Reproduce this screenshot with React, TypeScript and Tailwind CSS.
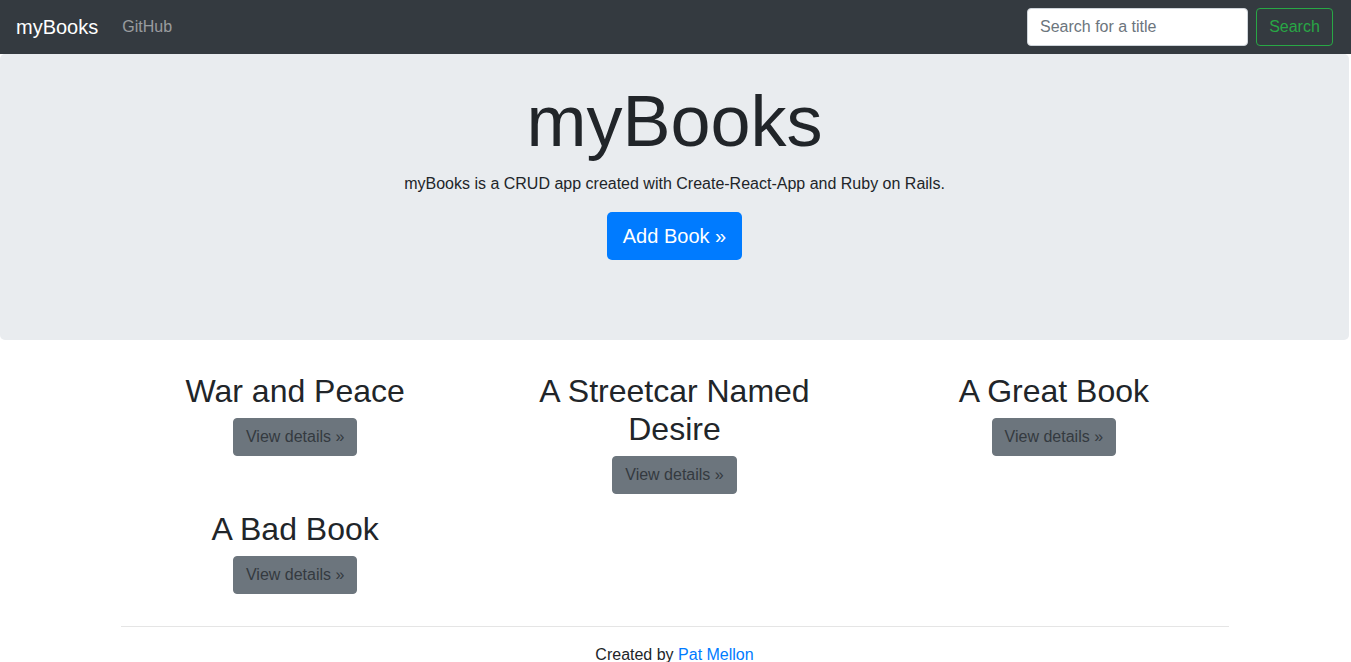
const books = [
  { id: 1, title: 'War and Peace' },
  { id: 2, title: 'A Streetcar Named Desire' },
  { id: 3, title: 'A Great Book' },
  { id: 4, title: 'A Bad Book' },
];

function Navbar() {
  return (
    <nav className="flex h-[54px] w-full flex-row items-center justify-between bg-[#343a40] pl-4 pr-[18px]">
      <div className="flex flex-row items-center">
        <a href="#" className="mr-4 text-[20px] leading-[30px] text-white">
          myBooks
        </a>
        <a href="#" className="px-2 text-[16px] leading-6 text-white/50">
          GitHub
        </a>
      </div>
      <form className="flex flex-row items-center" onSubmit={(e) => e.preventDefault()}>
        <input
          type="search"
          placeholder="Search for a title"
          className="h-[38px] w-[221px] rounded-[4px] border border-[#ced4da] bg-white px-3 text-[16px] text-[#495057] placeholder:text-[#6c757d] outline-none"
        />
        <button
          type="submit"
          className="ml-2 h-[38px] w-[77px] rounded-[4px] border border-[#28a745] text-[16px] text-[#28a745]"
        >
          Search
        </button>
      </form>
    </nav>
  );
}

function Jumbotron() {
  return (
    <div className="mr-[2px] rounded-[5px] bg-[#e9ecef] px-8 pt-[24px] pb-[64px] text-center">
      <h1 className="mb-2 text-[72px] leading-[86px] font-light">myBooks</h1>
      <p className="mb-4 text-[16px] leading-6">
        myBooks is a CRUD app created with Create-React-App and Ruby on Rails.
      </p>
      <p className="mb-4">
        <button
          type="button"
          className="h-[48px] rounded-[5px] bg-[#007bff] px-4 text-[20px] leading-[30px] text-white"
        >
          Add Book »
        </button>
      </p>
    </div>
  );
}

function BookCard({ title }: { title: string }) {
  return (
    <div className="px-[15px] text-center">
      <h2 className="mb-2 text-[32px] leading-[38px]">{title}</h2>
      <p className="mb-4">
        <a
          href="#"
          className="inline-block h-[38px] rounded-[4px] border border-[#6c757d] bg-[#6c757d] px-3 text-[16px] leading-[36px] text-[#343a40]"
        >
          View details »
        </a>
      </p>
    </div>
  );
}

export default function App() {
  return (
    <div className="min-h-screen bg-white text-[#212529] [font-family:'Liberation_Sans',Arial,sans-serif]">
      <Navbar />
      <Jumbotron />
      <div className="mx-auto mt-8 w-[1140px] pr-[2px]">
        <div className="grid grid-cols-3">
          {books.map((book) => (
            <BookCard key={book.id} title={book.title} />
          ))}
        </div>
        <div className="px-[15px]">
          <hr className="mt-4 mb-4 border-t border-black/10" />
          <footer className="text-center text-[16px] leading-6">
            Created by{' '}
            <a href="#" className="text-[#007bff]">
              Pat Mellon
            </a>
          </footer>
        </div>
      </div>
    </div>
  );
}
